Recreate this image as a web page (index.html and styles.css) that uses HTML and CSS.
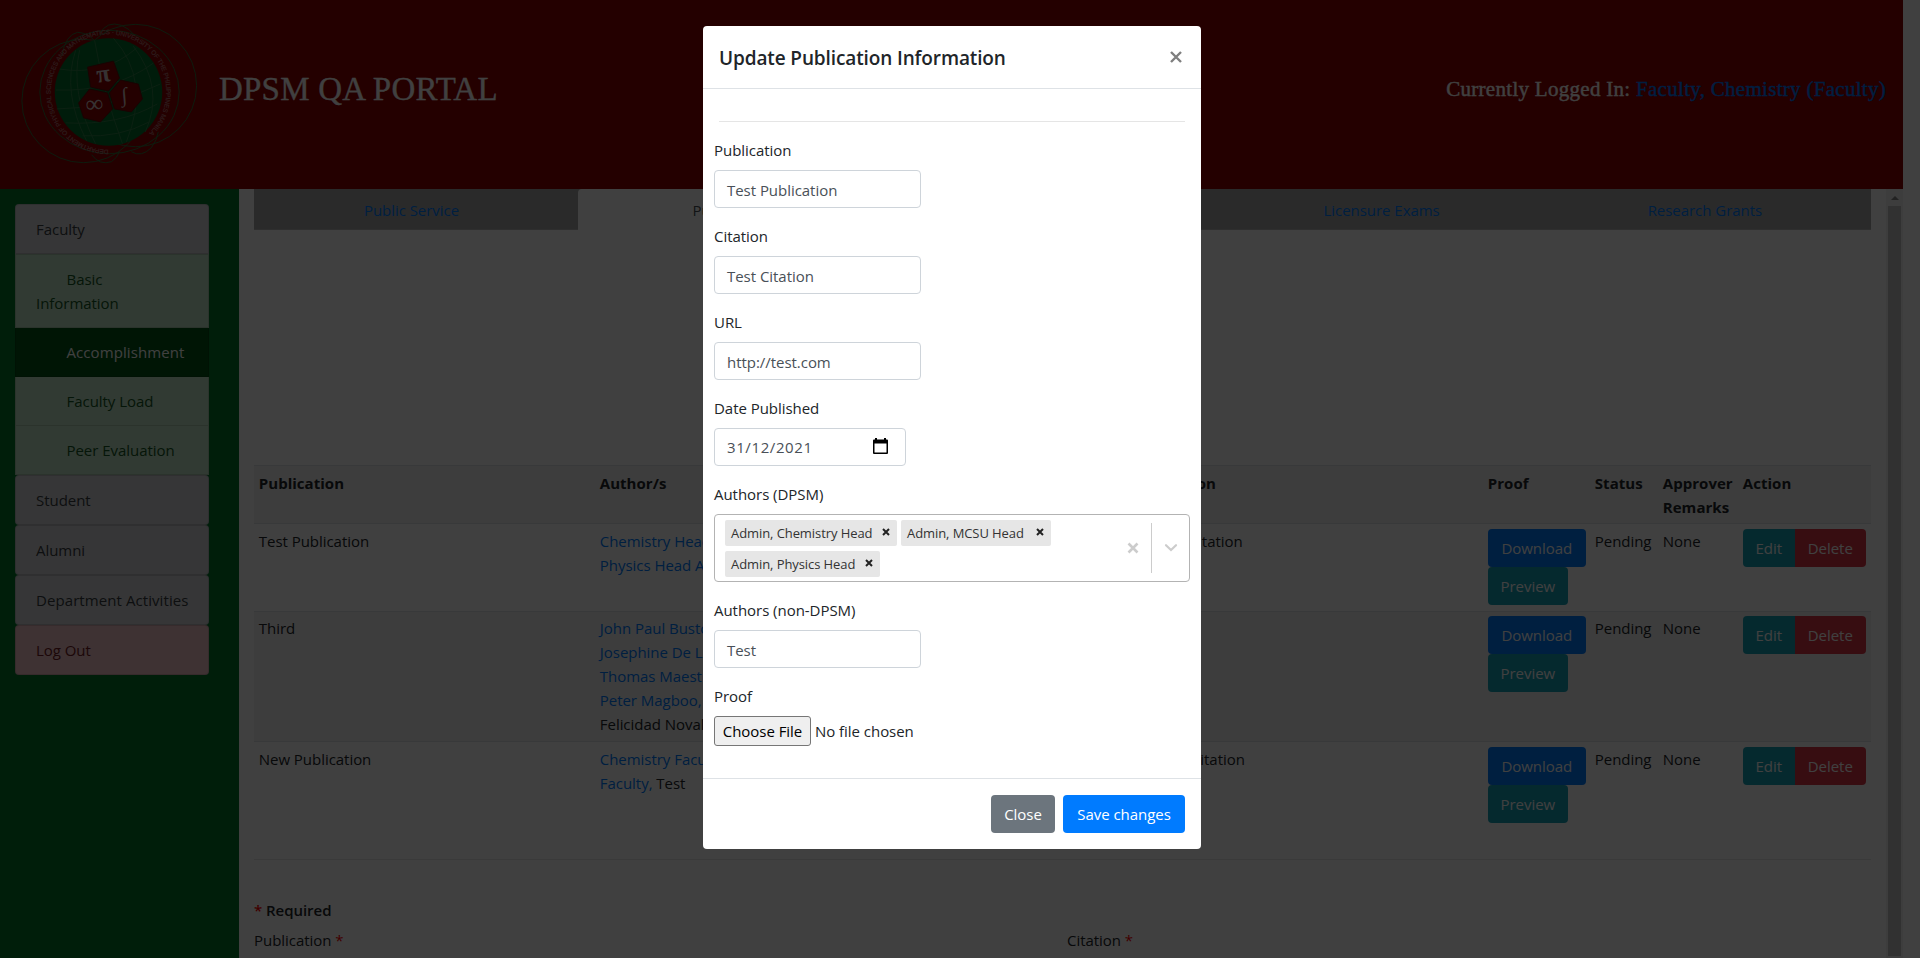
FILE: index.html
```html
<!DOCTYPE html>
<html lang="en">
<head>
<meta charset="utf-8">
<title>DPSM QA Portal</title>
<link rel="stylesheet" href="styles.css">
</head>
<body>
<div class="page">
  <header class="header">
    <svg class="logo" width="220" height="189" viewBox="0 0 220 189" fill="none">
      <defs><path id="ring" d="M109 150A58 58 0 0 1 109 34A58 58 0 0 1 109 150"/></defs>
      <g stroke="#34703a" stroke-width="1">
        <circle cx="84" cy="101" r="62"/>
        <circle cx="136" cy="85.500" r="61.500"/>
        <ellipse cx="110" cy="92" rx="70" ry="62"/>
        <path d="M62 56Q66 34 78 32Q90 33 96 42M100 34Q107 20 122 25Q130 28 136 36M92 155Q100 166 112 162Q118 158 120 152M132 152Q142 158 152 148Q158 140 159 132"/>
      </g>
      <circle cx="109" cy="92" r="54" fill="#00702c"/>
      <g stroke="#2f8048" stroke-width="1">
        <path d="M95 40Q104 92 123 144M76 50Q62 92 87 141M80 50Q70 92 96 144M114 38Q152 80 127 142M134 46Q166 88 146 132M60 69Q105 76 137 48M56 90Q115 92 154 63M57 109Q110 109 161 84M66 123Q120 126 158 104M83 136Q120 138 150 122"/>
      </g>
      <g fill="#900000" stroke="#600c08" stroke-width="1">
        <path d="M88 67L114 61L120 78L109 91L91 87Z"/>
        <path d="M121 80L139 84L143 99L132 112L115 109L110 93Z"/>
        <path d="M90 89L108 93L113 109L101 122L84 118L79 103Z"/>
      </g>
      <g class="logo-symbols">
        <text x="97" y="82" font-size="25" font-weight="700" transform="rotate(-8 103 76)">π</text>
        <text x="86" y="112" font-size="25" transform="rotate(-5 95 105)">∞</text>
        <text x="122" y="102" font-size="21" transform="rotate(-5 126 97)">∫</text>
      </g>
      <text class="logo-ring"><textPath href="#ring">DEPARTMENT OF PHYSICAL SCIENCES AND MATHEMATICS · UNIVERSITY OF THE PHILIPPINES MANILA</textPath></text>
    </svg>
    <h1 class="brand">DPSM QA PORTAL</h1>
    <p class="login">Currently Logged In: <a>Faculty, Chemistry (Faculty)</a></p>
  </header>
  <div class="columns">
    <nav class="sidebar">
      <a class="item top">Faculty</a>
      <div class="submenu">
        <a class="item sub"><span class="tab-space"></span>Basic<br>Information</a>
        <a class="item sub active"><span class="tab-space"></span>Accomplishment</a>
        <a class="item sub"><span class="tab-space"></span>Faculty Load</a>
        <a class="item sub"><span class="tab-space"></span>Peer Evaluation</a>
      </div>
      <a class="item">Student</a>
      <a class="item">Alumni</a>
      <a class="item wide">Department Activities</a>
      <a class="item logout">Log Out</a>
    </nav>
    <main class="main">
      <div class="tabs">
        <a>Public Service</a><a class="current">Publication</a><a>Training/Seminar</a><a>Licensure Exams</a><a>Research Grants</a>
      </div>
      <table class="table">
        <colgroup><col class="c1"><col class="c2"><col class="c3"><col class="c4"><col class="c5"><col class="c6"><col></colgroup>
        <tr class="striped"><th>Publication</th><th>Author/s</th><th>Citation</th><th>Proof</th><th>Status</th><th>Approver Remarks</th><th>Action</th></tr>
        <tr><td>Test Publication</td><td><a>Chemistry Head Admin,</a><br><a>Physics Head Admin</a></td><td>Test Citation</td>
          <td><div class="proof"><a class="btn primary">Download</a><a class="btn info">Preview</a></div></td><td>Pending</td><td>None</td>
          <td><div class="group"><a class="btn info">Edit</a><a class="btn danger">Delete</a></div></td></tr>
        <tr class="striped"><td>Third</td><td><a>John Paul Bustos,</a><br><a>Josephine De Leon,</a><br><a>Thomas Maestro,</a><br><a>Peter Magboo,</a><br>Felicidad Novales</td><td>Third</td>
          <td><div class="proof"><a class="btn primary">Download</a><a class="btn info">Preview</a></div></td><td>Pending</td><td>None</td>
          <td><div class="group"><a class="btn info">Edit</a><a class="btn danger">Delete</a></div></td></tr>
        <tr><td>New Publication</td><td><a>Chemistry Faculty</a><br><a>Faculty,</a> Test</td><td>New Citation</td>
          <td><div class="proof"><a class="btn primary">Download</a><a class="btn info">Preview</a></div></td><td>Pending</td><td>None</td>
          <td><div class="group"><a class="btn info">Edit</a><a class="btn danger">Delete</a></div></td></tr>
      </table>
      <hr class="rule">
      <p class="required"><i>*</i> Required</p>
      <div class="labels"><span>Publication <i>*</i></span><span>Citation <i>*</i></span></div>
    </main>
    <div class="scrollbar"><span class="arrow"></span><span class="thumb"></span></div>
  </div>
</div>
<div class="backdrop">
  <section class="modal">
    <div class="modal-header"><h2>Update Publication Information</h2>
      <svg width="12" height="12" viewBox="0 0 12 12"><path d="M1 1L11 11M11 1L1 11" stroke="#7f7f7f" stroke-width="2.400"/></svg>
    </div>
    <div class="modal-body">
      <hr>
      <div class="field"><label>Publication</label><div class="input">Test Publication</div></div>
      <div class="field"><label>Citation</label><div class="input">Test Citation</div></div>
      <div class="field"><label>URL</label><div class="input">http://test.com</div></div>
      <div class="field"><label>Date Published</label><div class="input date"><span>31/12/2021</span>
        <svg width="15" height="17" viewBox="0 0 15 17"><path d="M2 0H4V1.500H11V0H13V1.500H14Q15 1.500 15 2.500V15Q15 16 14 16H1Q0 16 0 15V2.500Q0 1.500 1 1.500H2ZM1.500 5.500V14.500H13.500V5.500Z" fill="#000" fill-rule="evenodd"/></svg></div></div>
      <div class="field"><label>Authors (DPSM)</label>
        <div class="select">
          <div class="tags">
            <span class="tag tag-a">Admin, Chemistry Head<svg width="8" height="8" viewBox="0 0 8 8"><path d="M1 1L7 7M7 1L1 7"/></svg></span>
            <span class="tag tag-b">Admin, MCSU Head<svg width="8" height="8" viewBox="0 0 8 8"><path d="M1 1L7 7M7 1L1 7"/></svg></span>
            <span class="tag tag-c">Admin, Physics Head<svg width="8" height="8" viewBox="0 0 8 8"><path d="M1 1L7 7M7 1L1 7"/></svg></span>
          </div>
          <svg width="12" height="12" viewBox="0 0 12 12"><path d="M1.500 1.500L10.500 10.500M10.500 1.500L1.500 10.500" stroke="#ccc" stroke-width="2.600"/></svg>
          <span class="divider"></span>
          <svg class="chevron" width="14" height="10" viewBox="0 0 14 10" fill="none"><path d="M2 2.200L7 7L12 2.200" stroke="#ccc" stroke-width="2.200" stroke-linecap="round"/></svg>
        </div>
      </div>
      <div class="field"><label>Authors (non-DPSM)</label><div class="input">Test</div></div>
      <div class="field"><label>Proof</label><div class="file"><span class="choose">Choose File</span><span>No file chosen</span></div></div>
    </div>
    <div class="modal-footer"><a class="btn secondary">Close</a><a class="btn primary save">Save changes</a></div>
  </section>
</div>
</body>
</html>
```
FILE: styles.css
```css
* { box-sizing: border-box; }
body {
  margin: 0;
  height: 958px;
  overflow: hidden;
  background: #fff;
  color: #212529;
  font: 15px/24px "Open Sans", "Noto Sans", sans-serif;
  letter-spacing: -0.04px;
}
h1, h2, p { margin: 0; font-weight: 400; }
a { color: #007bff; text-decoration: none; }
i { color: #f00; font-style: normal; }
hr { width: 100%; margin: 16px 0; border: 0; border-top: 1px solid rgba(0, 0, 0, .1); }

.page { width: 1903px; height: 958px; display: flex; flex-direction: column; }
.header { height: 189px; flex: none; display: flex; align-items: center; background: #900000; color: #fff; font-family: Georgia, "Liberation Serif", serif; }
.logo { flex: none; width: 219px; }
.logo-symbols { fill: #d8c8c8; font-family: "Liberation Serif", "DejaVu Serif", serif; letter-spacing: 0; }
.logo-ring { fill: #b07070; font: 6.500px "Liberation Sans", sans-serif; letter-spacing: -.08px; stroke: #b07070; stroke-width: .2px; }
.brand { font-size: 33px; line-height: 40px; padding-bottom: 11px; letter-spacing: .2px; white-space: nowrap; -webkit-text-stroke: .3px currentColor; }
.login { margin-left: auto; padding: 0 17px 11px 0; font-size: 21px; letter-spacing: .29px; white-space: nowrap; -webkit-text-stroke: .4px currentColor; }
.login a { -webkit-text-stroke: .4px #007bff; }

.columns { flex: 1; min-height: 0; display: flex; }
.sidebar { width: 239px; flex: none; padding: 15px 30px 0 15px; background: #007a2b; }
.item { display: block; padding: 12px 20px; border: 1px solid rgba(0, 0, 0, .125); border-radius: 4px; background: #d6d8db; color: #383d41; height: 50px; white-space: nowrap; }
.item.top { border-radius: 4px 4px 0 0; }
.item.wide { letter-spacing: .08px; }
.item.sub { height: 49px; border-top: 0; border-radius: 0; background: #c3e6cb; color: #155724; }
.item.sub:first-child { height: 74px; border-top: 1px solid rgba(0, 0, 0, .125); }
.item.sub.active { background: #005414; color: #fff; letter-spacing: .08px; }
.item.logout { background: #f5c6cb; color: #721c24; }
.tab-space { display: inline-block; width: 30.500px; }

.main { width: 1647px; flex: none; padding: 0 15px; overflow: hidden; background: #fff; }
.tabs { display: grid; grid-template-columns: 324px repeat(4, 1fr); height: 41px; background: #a9a9a9; border-bottom: 1px solid #b8b8b8; text-align: center; line-height: 42px; }
.tabs a { padding-right: 9px; }
.tabs .current { height: 41px; padding-right: 17px; border-radius: 4px 4px 0 0; background: #fff; color: #495057; }
.table { width: 100%; margin: 235px 0 31px; border-collapse: collapse; table-layout: fixed; }
.table th, .table td { padding: 5px 4.800px 4.600px; border-top: 1px solid #dee2e6; text-align: left; vertical-align: top; }
.table th { padding-bottom: 4px; color: #212529; letter-spacing: .03px; }
.table tr:first-child th { height: 58px; }
.table td { padding-top: 4.600px; padding-bottom: 5px; }
.table tr:nth-child(2) td { padding-bottom: 6px; }
.striped { background: #f2f2f2; }
.c1 { width: 341px; }
.c2 { width: 556px; }
.c3 { width: 332px; }
.c4 { width: 107px; }
.c5 { width: 68px; }
.c6 { width: 80px; }
.proof { display: flex; flex-direction: column; align-items: flex-start; }
.group { display: flex; }
.btn { display: block; height: 38px; padding: 7px 0; border-radius: 4px; color: #fff; text-align: center; white-space: nowrap; }
.primary { background: #007bff; }
.info { background: #17a2b8; }
.danger { background: #dc3545; }
.secondary { background: #6c757d; }
.proof .primary { width: 98px; }
.proof .info { width: 80px; }
.group .info { width: 52px; border-radius: 4px 0 0 4px; }
.group .danger { width: 71px; border-radius: 0 4px 4px 0; }
.rule { margin: 0 0 38px; }
.required { font-weight: 600; }
.labels { display: grid; grid-template-columns: 813px 1fr; padding-top: 6px; }
.scrollbar { flex: 1; background: #f1f1f1; display: flex; flex-direction: column; align-items: center; }
.arrow { margin: 7px 0 6px; border: 4px solid transparent; border-top: 0; border-bottom-color: #888; }
.thumb { width: 13px; height: 750px; background: #c1c1c1; }

.backdrop { position: absolute; inset: 0; padding-top: 26px; background: rgba(0, 0, 0, .75); }
.modal { width: 498px; height: 823px; margin-left: 703px; border-radius: 4px; background: #fff; display: flex; flex-direction: column; }
.modal-header { display: flex; justify-content: space-between; height: 63px; padding: 17px 19px 0 16px; border-bottom: 1px solid #dee2e6; }
.modal-header h2 { font-size: 19px; line-height: 30px; font-weight: 600; letter-spacing: -.12px; }
.modal-header svg { margin-top: 8px; }
.modal-body { flex: 1; padding: 0 11px; }
.modal-body hr { width: 466px; margin: 32px 5px 16px; }
.field { margin-bottom: 16px; }
.field label { display: block; margin-bottom: 8px; }
.input { width: 207px; height: 38px; padding: 7px 12px; border: 1px solid #ced4da; border-radius: 4px; color: #495057; }
.date { width: 192px; display: flex; justify-content: space-between; padding: 6px 17px 0 12px; letter-spacing: .6px; }
.date svg { margin-top: 3px; }
.select { width: 476px; height: 68px; display: flex; align-items: center; border: 1px solid #b3b3b3; border-radius: 4px; padding-right: 11px; }
.tags { flex: 1; padding: 0 0 0 10px; display: flex; flex-wrap: wrap; gap: 5px 4px; }
.select > svg, .select > .divider { flex: none; }
.tag { height: 26px; display: flex; align-items: center; justify-content: space-between; padding: 0 7px 0 6px; border-radius: 2px; background: #e6e6e6; color: #333; font-size: 13px; letter-spacing: -.08px; white-space: nowrap; }
.tag svg { stroke: #222; stroke-width: 2; margin-bottom: 1px; }
.tag-a { width: 172px; }
.tag-b { width: 150px; }
.tag-c { width: 155px; }
.divider { width: 1px; height: 50px; margin: 0 12px; background: #ccc; }
.file { display: flex; gap: 4px; height: 30px; line-height: 30px; }
.choose { width: 97px; border: 1px solid #767676; border-radius: 3px; background: #efefef; color: #000; text-align: center; line-height: 28px; }
.modal-footer { height: 71px; display: flex; justify-content: flex-end; gap: 8px; padding: 16px 16px 0; border-top: 1px solid #dee2e6; }
.save { width: 122px; }
.modal-footer .secondary { width: 64px; }
```
